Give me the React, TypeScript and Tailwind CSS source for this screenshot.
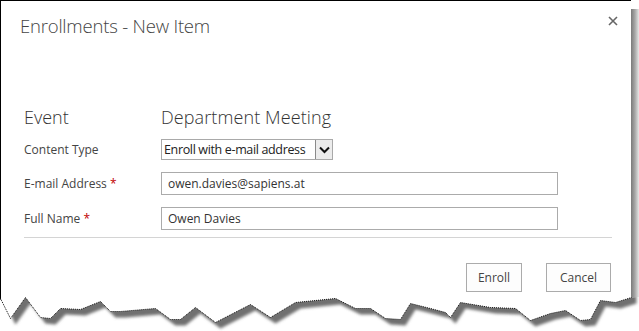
const torn: [number, number][] = [
  [0, 13], [10, 33], [25, 12], [40, 32], [50, 33], [60, 23], [80, 24], [100, 16], [110, 26],
  [120, 26], [155, 23], [170, 34], [180, 34], [195, 22], [215, 37], [250, 19], [270, 32],
  [295, 17], [335, 13], [355, 23], [370, 23], [385, 33], [400, 34], [410, 18], [430, 23],
  [445, 27], [450, 32], [460, 17], [490, 22], [515, 23], [530, 35], [550, 28], [565, 25],
  [580, 35], [590, 34], [600, 15], [615, 17], [631, 12],
]

function TornEdge() {
  const line = torn.map(([x, y], i) => `${i === 0 ? 'M' : 'L'}${x + 0.5} ${y + 0.5}`).join(' ')
  const paper = `M0 -20 ${line.replace('M', 'L')} L631 -20 Z`
  const below = `${line} L639 12 L639 46 L0 46 Z`
  return (
    <svg width="639" height="46" viewBox="0 0 639 46" className="absolute left-0 top-[285px]">
      <defs>
        <filter id="blur" x="-10%" y="-50%" width="120%" height="200%">
          <feGaussianBlur stdDeviation="1.8" />
        </filter>
        <clipPath id="below">
          <path d={below} />
        </clipPath>
      </defs>
      <path d={below} fill="#fff" />
      <g clipPath="url(#below)">
        <path d={paper} transform="translate(5 6)" fill="#6f6f6f" filter="url(#blur)" />
      </g>
      <path d={line} fill="none" stroke="#111" strokeWidth="1" strokeDasharray="1 1" />
    </svg>
  )
}

export default function App() {
  return (
    <div className="relative w-[639px] h-[331px] bg-white overflow-hidden font-['Open_Sans','Noto_Sans',sans-serif] text-[#444]">
      <div className="flex h-[300px]">
        <div className="w-[631px] border-t border-l border-black bg-white flex flex-col">
          <div className="flex justify-between items-start pl-[19px] pr-[13px] pt-[12px]">
            <h1 className="text-[18.5px] leading-[26px] font-light text-[#444] tracking-[-0.2px]">Enrollments - New Item</h1>
            <svg width="10" height="10" viewBox="0 0 10 10" className="mt-[3px]">
              <path d="M1 1 L9 9 M9 1 L1 9" stroke="#666" strokeWidth="1.6" />
            </svg>
          </div>

          <div className="grid grid-cols-[137px_1fr] pl-[23px] mt-[66px] items-center text-[12px]">
            <div className="text-[18px] leading-[24px] font-light text-[#333]">Event</div>
            <div className="text-[18px] leading-[24px] font-light text-[#333] tracking-[0.1px]">Department Meeting</div>

            <div className="mt-[10px]">Content Type</div>
            <div className="mt-[10px] flex w-[172px] h-[21px] border border-[#a9a9a9]">
              <span className="flex-1 pl-[2px] leading-[19px] text-[12.5px] text-[#222] whitespace-nowrap overflow-hidden tracking-[-0.35px]">Enroll with e-mail address</span>
              <span className="w-[17px] h-full flex items-center justify-center border-l border-[#8a8a8a] bg-[#ececec]">
                <svg width="11" height="8" viewBox="0 0 11 8">
                  <path d="M1 1.5 L5.5 6 L10 1.5" fill="none" stroke="#111" strokeWidth="2" />
                </svg>
              </span>
            </div>

            <div className="mt-[12px]">
              E-mail Address <span className="text-[#bf0000]">*</span>
            </div>
            <div className="mt-[12px] w-[397px] h-[23px] border border-[#ababab] pl-[6px] leading-[21px] text-[12px] text-[#333]">
              owen.davies@sapiens.at
            </div>

            <div className="mt-[12px]">
              Full Name <span className="text-[#bf0000]">*</span>
            </div>
            <div className="mt-[12px] w-[397px] h-[23px] border border-[#ababab] pl-[6px] leading-[21px] text-[12px] text-[#333]">
              Owen Davies
            </div>
          </div>

          <div className="ml-[23px] mr-[19px] mt-[7px] border-t border-[#d4d4d4]" />

          <div className="flex justify-end gap-[24px] pr-[20px] mt-[25px] text-[12px]">
            <button className="w-[56px] h-[29px] border border-[#ababab] bg-[#fdfdfd] text-[#444]">Enroll</button>
            <button className="w-[65px] h-[29px] border border-[#ababab] bg-[#fdfdfd] text-[#444]">Cancel</button>
          </div>
        </div>
        <div className="w-[8px] mt-[9px] bg-gradient-to-r from-[#7a7a7a] via-[#a8a8a8] to-[#e8e8e8]" />
      </div>
      <TornEdge />
    </div>
  )
}
